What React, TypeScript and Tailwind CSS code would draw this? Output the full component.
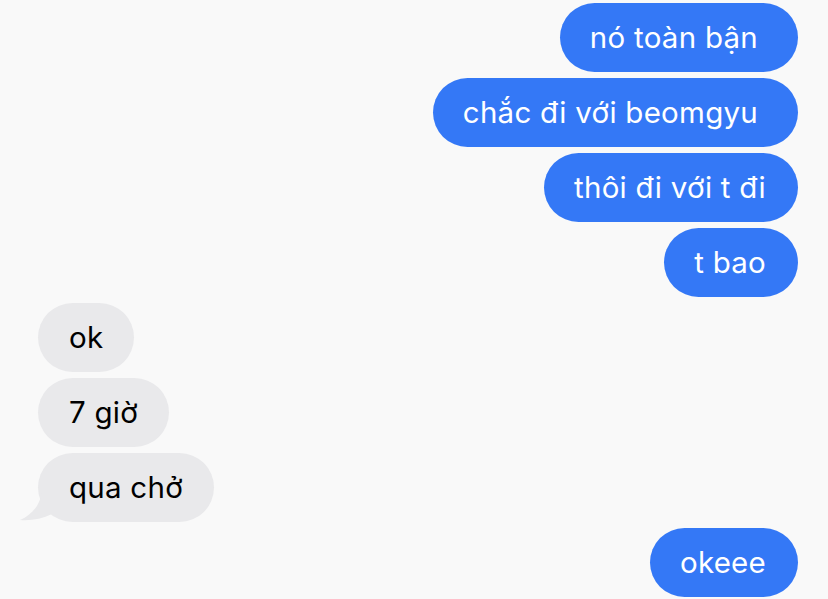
const messages: { text: string; me: boolean; wide?: boolean; tail?: boolean }[] = [
  { text: 'nó toàn bận', me: true, wide: true },
  { text: 'chắc đi với beomgyu', me: true, wide: true },
  { text: 'thôi đi với t đi', me: true },
  { text: 't bao', me: true },
  { text: 'ok', me: false },
  { text: '7 giờ', me: false },
  { text: 'qua chở', me: false, tail: true },
  { text: 'okeee', me: true },
]

export default function App() {
  return (
    <div
      className="w-[828px] h-[599px] overflow-hidden bg-[#f9f9f9] pt-[3px] flex flex-col gap-[6px]"
      style={{ fontFamily: 'Inter, "Noto Sans", sans-serif' }}
    >
      {messages.map((m, i) =>
        m.me ? (
          <div key={i} className="flex justify-end pr-[30px]">
            <div
              className={`h-[69px] rounded-full bg-[#3478f6] text-white text-[29.5px] flex items-center pl-[30px] tracking-[0.25px] ${
                m.wide ? 'pr-[40px]' : 'pr-[32px]'
              }`}
            >
              {m.text}
            </div>
          </div>
        ) : (
          <div key={i} className="flex justify-start pl-[38px]">
            <div className="relative h-[69px] rounded-full bg-[#e9e9eb] text-black text-[29.5px] flex items-center px-[31px] tracking-[0.25px]">
              {m.tail && (
                <svg
                  className="absolute left-[-18px] bottom-0"
                  width="40"
                  height="34"
                  viewBox="0 0 40 34"
                >
                  <path d="M22 0 C22 14 14 26 0 32 C10 33 22 31 32 26 L40 22 L40 0 Z" fill="#e9e9eb" />
                </svg>
              )}
              <span className="relative">{m.text}</span>
            </div>
          </div>
        )
      )}
    </div>
  )
}
